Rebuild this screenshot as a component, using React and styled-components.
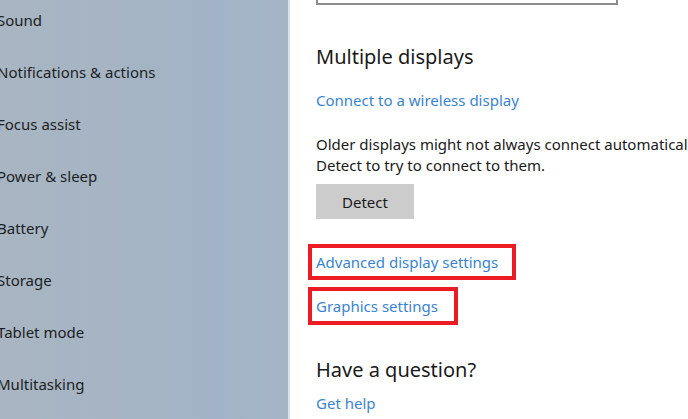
import React from 'react';
import styled, { createGlobalStyle } from 'styled-components';

const GlobalStyle = createGlobalStyle`
  html, body {
    margin: 0;
    padding: 0;
    background: #ffffff;
  }
  body {
    font-family: "Noto Sans", "Open Sans", sans-serif;
    -webkit-font-smoothing: antialiased;
  }
`;

const Window = styled.div`
  display: flex;
  width: 688px;
  height: 419px;
  overflow: hidden;
`;

const Sidebar = styled.nav`
  width: 288px;
  flex-shrink: 0;
  background: linear-gradient(90deg, #a9b5c2 0%, #a5b4c4 45%, #a1b3c6 75%, #a5b5c6 100%);
  border-right: 2px solid #d6e2ee;
  overflow: hidden;
`;

const NavList = styled.ul`
  list-style: none;
  margin: -6px 0 0 -3px;
  padding: 0;
`;

const NavItem = styled.li`
  height: 52px;
  display: flex;
  align-items: center;
  font-size: 15px;
  color: #1b1f24;
  white-space: nowrap;
`;

const Main = styled.main`
  flex: 1;
  display: flex;
  flex-direction: column;
  align-items: flex-start;
  padding-left: 26px;
  overflow: hidden;
  background: #ffffff;
`;

const InputStub = styled.div`
  width: 298px;
  height: 3px;
  border: 2px solid #8c8c8c;
  border-top: none;
`;

const Heading = styled.h2`
  margin: ${p => p.$top}px 0 0;
  font-size: 20px;
  font-weight: 400;
  line-height: 28px;
  color: #1a1a1a;
  white-space: nowrap;
`;

const Link = styled.a`
  display: block;
  font-size: 15px;
  line-height: 22px;
  color: #3a84cf;
  text-decoration: none;
  white-space: nowrap;
  margin-top: ${p => p.$top || 0}px;
  cursor: pointer;
`;

const Text = styled.p`
  margin: 23px 0 0;
  font-size: 15px;
  line-height: 21px;
  color: #1a1a1a;
  white-space: nowrap;
`;

const Button = styled.button`
  margin-top: 8px;
  width: 98px;
  height: 35px;
  border: none;
  background: #cccccc;
  font-family: inherit;
  font-size: 15px;
  color: #1a1a1a;
  padding: 0;
`;

const Highlight = styled.div`
  margin: ${p => p.$top}px 0 0 -8px;
  width: ${p => p.$w}px;
  height: ${p => p.$h}px;
  box-sizing: border-box;
  border: 4px solid #ed1c24;
  padding-left: 4px;
  display: flex;
  align-items: center;
`;

const navItems = [
  'Sound',
  'Notifications & actions',
  'Focus assist',
  'Power & sleep',
  'Battery',
  'Storage',
  'Tablet mode',
  'Multitasking',
];

export default function App() {
  return (
    <Window>
      <GlobalStyle />
      <Sidebar>
        <NavList>
          {navItems.map(item => (
            <NavItem key={item}>{item}</NavItem>
          ))}
        </NavList>
      </Sidebar>
      <Main>
        <InputStub />
        <Heading $top={38}>Multiple displays</Heading>
        <Link $top={18}>Connect to a wireless display</Link>
        <Text>
          Older displays might not always connect automatically. Select
          <br />
          Detect to try to connect to them.
        </Text>
        <Button>Detect</Button>
        <Highlight $top={25} $w={208} $h={36}>
          <Link>Advanced display settings</Link>
        </Highlight>
        <Highlight $top={7} $w={150} $h={38}>
          <Link>Graphics settings</Link>
        </Highlight>
        <Heading $top={31}>Have a question?</Heading>
        <Link $top={8}>Get help</Link>
      </Main>
    </Window>
  );
}
